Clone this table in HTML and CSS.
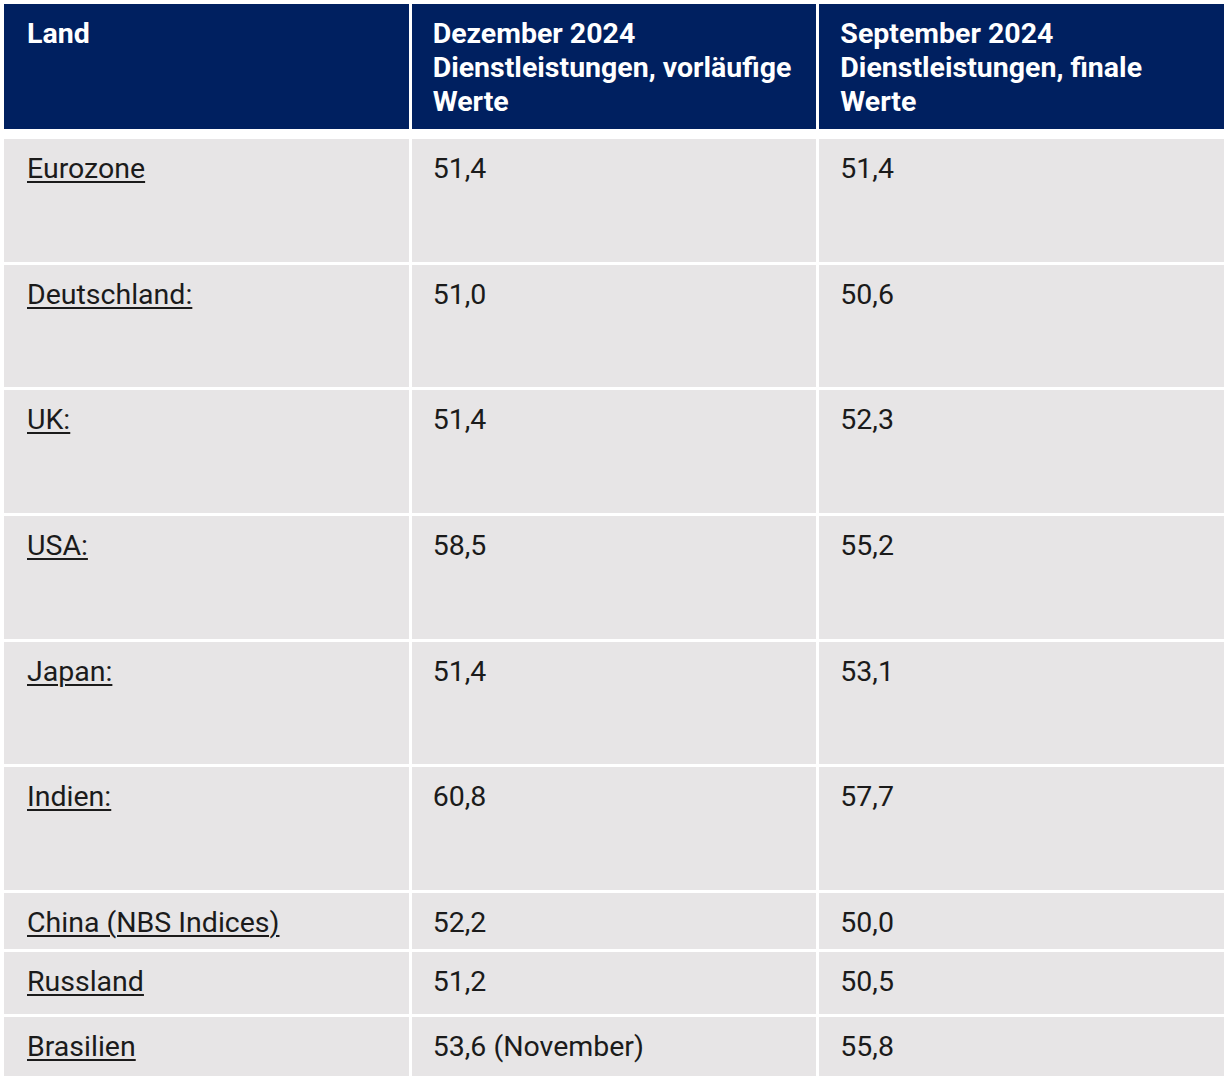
FILE: index.html
```html
<!DOCTYPE html>
<html lang="de">
<head>
<meta charset="utf-8">
<title>Einkaufsmanagerindizes Dienstleistungen</title>
<link rel="stylesheet" href="styles.css">
</head>
<body>
<div class="table">
  <div class="row head">
    <div class="cell">Land</div>
    <div class="cell">Dezember 2024<br>Dienstleistungen, vorläufige<br>Werte</div>
    <div class="cell">September 2024<br>Dienstleistungen, finale<br>Werte</div>
  </div>
  <div class="row tall">
    <div class="cell"><a href="#">Eurozone</a></div>
    <div class="cell">51,4</div>
    <div class="cell">51,4</div>
  </div>
  <div class="row tall">
    <div class="cell"><a href="#">Deutschland:</a></div>
    <div class="cell">51,0</div>
    <div class="cell">50,6</div>
  </div>
  <div class="row tall">
    <div class="cell"><a href="#">UK:</a></div>
    <div class="cell">51,4</div>
    <div class="cell">52,3</div>
  </div>
  <div class="row tall">
    <div class="cell"><a href="#">USA:</a></div>
    <div class="cell">58,5</div>
    <div class="cell">55,2</div>
  </div>
  <div class="row tall">
    <div class="cell"><a href="#">Japan:</a></div>
    <div class="cell">51,4</div>
    <div class="cell">53,1</div>
  </div>
  <div class="row tall">
    <div class="cell"><a href="#">Indien:</a></div>
    <div class="cell">60,8</div>
    <div class="cell">57,7</div>
  </div>
  <div class="row china">
    <div class="cell"><a href="#">China (NBS Indices)</a></div>
    <div class="cell">52,2</div>
    <div class="cell">50,0</div>
  </div>
  <div class="row russ">
    <div class="cell"><a href="#">Russland</a></div>
    <div class="cell">51,2</div>
    <div class="cell">50,5</div>
  </div>
  <div class="row bras">
    <div class="cell"><a href="#">Brasilien</a></div>
    <div class="cell">53,6 (November)</div>
    <div class="cell">55,8</div>
  </div>
</div>
</body>
</html>
```

FILE: styles.css
```css
html, body {
  margin: 0;
  padding: 0;
  background: #ffffff;
}

body {
  font-family: Roboto, "Liberation Sans", Arial, sans-serif;
  font-size: 28.5px;
  line-height: 34px;
  color: #1b1b1b;
}

.table {
  display: flex;
  flex-direction: column;
  gap: 3px;
  width: 1220px;
  padding: 4px 0 0 4px;
}

.row {
  display: grid;
  grid-template-columns: 1fr 1fr 1fr;
  column-gap: 3px;
}

.cell {
  background: #e7e5e6;
  padding: 13px 16px 0 21px;
}

.cell:first-child {
  padding-left: 23px;
}

.head {
  height: 125px;
  margin-bottom: 7px;
}

.head .cell {
  background: #002060;
  color: #ffffff;
  font-weight: 700;
  padding-top: 13px;
}

.tall { height: 122.7px; }
.china { height: 56px; }
.russ { height: 62px; }
.bras { height: 59px; }

.cell a {
  color: #1b1b1b;
  text-decoration: underline;
  text-decoration-thickness: 1.5px;
  text-underline-offset: 3px;
}
```
